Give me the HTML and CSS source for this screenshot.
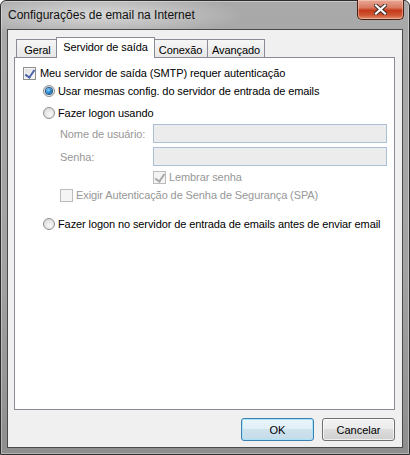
FILE: index.html
```html
<!DOCTYPE html>
<html lang="pt-BR">
<head>
  <meta charset="UTF-8">
  <title>Configurações de email na Internet</title>
  <link rel="stylesheet" href="styles.css">
</head>
<body>
  <div class="window">
    <div class="titlebar">
      <span class="title">Configurações de email na Internet</span>
      <button class="close" type="button">
        <svg width="13" height="11" viewBox="0 0 13 11">
          <path d="M2 1.5 L11 9.5 M11 1.5 L2 9.5" stroke="#3b2a25" stroke-width="4" stroke-linecap="square"/>
          <path d="M2 1.5 L11 9.5 M11 1.5 L2 9.5" stroke="#fff" stroke-width="2.2" stroke-linecap="square"/>
        </svg>
      </button>
    </div>

    <div class="client">
      <div class="tabs">
        <div class="tab tab-geral">Geral</div>
        <div class="tab active">Servidor de saída</div>
        <div class="tab tab-conexao">Conexão</div>
        <div class="tab tab-avancado">Avançado</div>
      </div>

      <div class="panel">
        <label class="row row-auth">
          <span class="check checked"></span>
          <span>Meu servidor de saída (SMTP) requer autenticação</span>
        </label>

        <div class="group">
          <label class="row">
            <span class="radio on"></span>
            <span>Usar mesmas config. do servidor de entrada de emails</span>
          </label>
          <label class="row row-logon">
            <span class="radio"></span>
            <span>Fazer logon usando</span>
          </label>

          <div class="logon">
            <div class="field">
              <span class="field-label">Nome de usuário:</span>
              <span class="input"></span>
            </div>
            <div class="field field-senha">
              <span class="field-label">Senha:</span>
              <span class="input"></span>
            </div>
            <label class="row disabled row-remember">
              <span class="check checked off"></span>
              <span>Lembrar senha</span>
            </label>
            <label class="row disabled">
              <span class="check off"></span>
              <span>Exigir Autenticação de Senha de Segurança (SPA)</span>
            </label>
          </div>

          <label class="row row-before">
            <span class="radio"></span>
            <span>Fazer logon no servidor de entrada de emails antes de enviar email</span>
          </label>
        </div>
      </div>

      <div class="buttons">
        <button class="btn default" type="button">OK</button>
        <button class="btn" type="button">Cancelar</button>
      </div>
    </div>
  </div>
</body>
</html>
```

FILE: styles.css
```css
* {
  box-sizing: border-box;
}
body {
  margin: 0;
  background: #fff;
  font-family: 'Liberation Sans', Arial, sans-serif;
  font-size: 11px;
  letter-spacing: -0.1px;
  color: #000;
}
.window {
  width: 410px;
  height: 455px;
  border: 1px solid #2e2e2e;
  border-radius: 6px 6px 0 0;
  padding: 0 6px 6px;
  display: flex;
  flex-direction: column;
  background:
    radial-gradient(ellipse 150px 22px at 95px 14px, rgba(255, 255, 255, 0.55), rgba(255, 255, 255, 0) 100%),
    linear-gradient(#a9a9a9, #a2a2a2 60%, #8e8e8e);
  box-shadow: inset 0 0 0 1px rgba(255, 255, 255, 0.35);
}
.titlebar {
  height: 28px;
  display: flex;
  align-items: flex-start;
  padding-left: 1px;
}
.title {
  padding-top: 7px;
  line-height: 15px;
  font-size: 12px;
  letter-spacing: 0;
  color: #111;
}
.close {
  margin: -1px -1px 0 auto;
  width: 47px;
  height: 20px;
  padding: 0;
  border: 1px solid #4a2118;
  border-top: none;
  border-radius: 0 0 5px 5px;
  display: flex;
  align-items: center;
  justify-content: center;
  background: linear-gradient(#e8a898, #d97a60 40%, #c43a1a 55%, #cf5533 80%, #e29070);
  box-shadow: inset 0 0 0 1px rgba(255, 220, 200, 0.45);
}
.client {
  flex: 1;
  border: 1px solid #4a4a4a;
  background: #f0f0f0;
  padding: 7px 7px 0 6px;
  display: flex;
  flex-direction: column;
}
.tabs {
  height: 20px;
  display: flex;
  align-items: flex-end;
  padding-left: 2px;
  position: relative;
  z-index: 1;
}
.tab {
  height: 18px;
  border: 1px solid #898c95;
  border-bottom: none;
  background: linear-gradient(#f6f6f6, #e7e7e7);
  padding-top: 3px;
  line-height: 14px;
  text-align: center;
  white-space: nowrap;
  margin-right: -1px;
}
.tab.active {
  width: 99px;
  height: 21px;
  margin: 0 -2px -1px -2px;
  background: #fff;
  padding-top: 2px;
  position: relative;
}
.tab-geral {
  width: 43px;
}
.tab-conexao {
  width: 55px;
}
.tab-avancado {
  width: 58px;
}
.panel {
  height: 353px;
  border: 1px solid #898c95;
  background: #fff;
  padding: 6px 0 0 8px;
}
.row {
  display: flex;
  align-items: center;
  height: 18px;
  white-space: nowrap;
}
.row-auth .check {
  margin-right: 4px;
}
.group {
  padding-left: 20px;
}
.row-logon {
  margin-top: 4px;
}
.logon {
  padding-left: 17px;
}
.field {
  display: flex;
  align-items: center;
  height: 19px;
  margin-top: 2px;
}
.field-senha {
  margin-top: 4px;
}
.field-label {
  width: 93px;
  white-space: nowrap;
  color: #979797;
}
.input {
  width: 234px;
  height: 19px;
  border: 1px solid #abbfd7;
  background: #ececec;
}
.disabled {
  color: #979797;
}
.row-remember {
  margin-top: 2px;
  padding-left: 93px;
}
.row-before {
  margin-top: 11px;
}
.check {
  width: 13px;
  height: 13px;
  margin-right: 3px;
  border: 1px solid #8e8f8f;
  background: linear-gradient(135deg, #dcdcdc, #fbfbfb);
  box-shadow: inset 0 0 0 1px #f4f4f4;
  position: relative;
  flex: none;
}
.check.checked::after {
  content: "";
  position: absolute;
  left: 2px;
  top: 0;
  width: 4px;
  height: 8px;
  border: solid #4a64a8;
  border-width: 0 2px 2px 0;
  transform: translateX(1px) rotate(35deg);
}
.check.off {
  border-color: #bcbcbc;
  background: #f4f4f4;
}
.check.off.checked::after {
  border-color: #a8a8a8;
}
.radio {
  width: 12px;
  height: 12px;
  margin-right: 3px;
  border-radius: 50%;
  border: 1px solid #8e8f8f;
  background: radial-gradient(circle at 60% 65%, #f8f8f8, #d4d4d4);
  position: relative;
  flex: none;
}
.radio.on::after {
  content: "";
  position: absolute;
  left: 2px;
  top: 2px;
  width: 6px;
  height: 6px;
  border-radius: 50%;
  background: radial-gradient(circle at 40% 35%, #8fd4ff, #1c80c8 55%, #0b3f75);
  box-shadow: 0 0 0 1px #2a5b8a;
}
.buttons {
  display: flex;
  justify-content: flex-end;
  gap: 8px;
  margin-top: 8px;
}
.btn {
  width: 73px;
  height: 23px;
  padding: 0;
  font: inherit;
  color: #000;
  border: 1px solid #707070;
  border-radius: 3px;
  background: linear-gradient(#f2f2f2, #ebebeb 50%, #dddddd 50%, #cfcfcf);
  box-shadow: inset 0 0 0 1px rgba(255, 255, 255, 0.7);
}
.btn.default {
  border-color: #3c7fb1;
  box-shadow: inset 0 0 0 1px #a8e3f8;
  background: linear-gradient(#eaf6fb, #e0eef6 50%, #cfe3ee 50%, #c4dbe8);
}
```
